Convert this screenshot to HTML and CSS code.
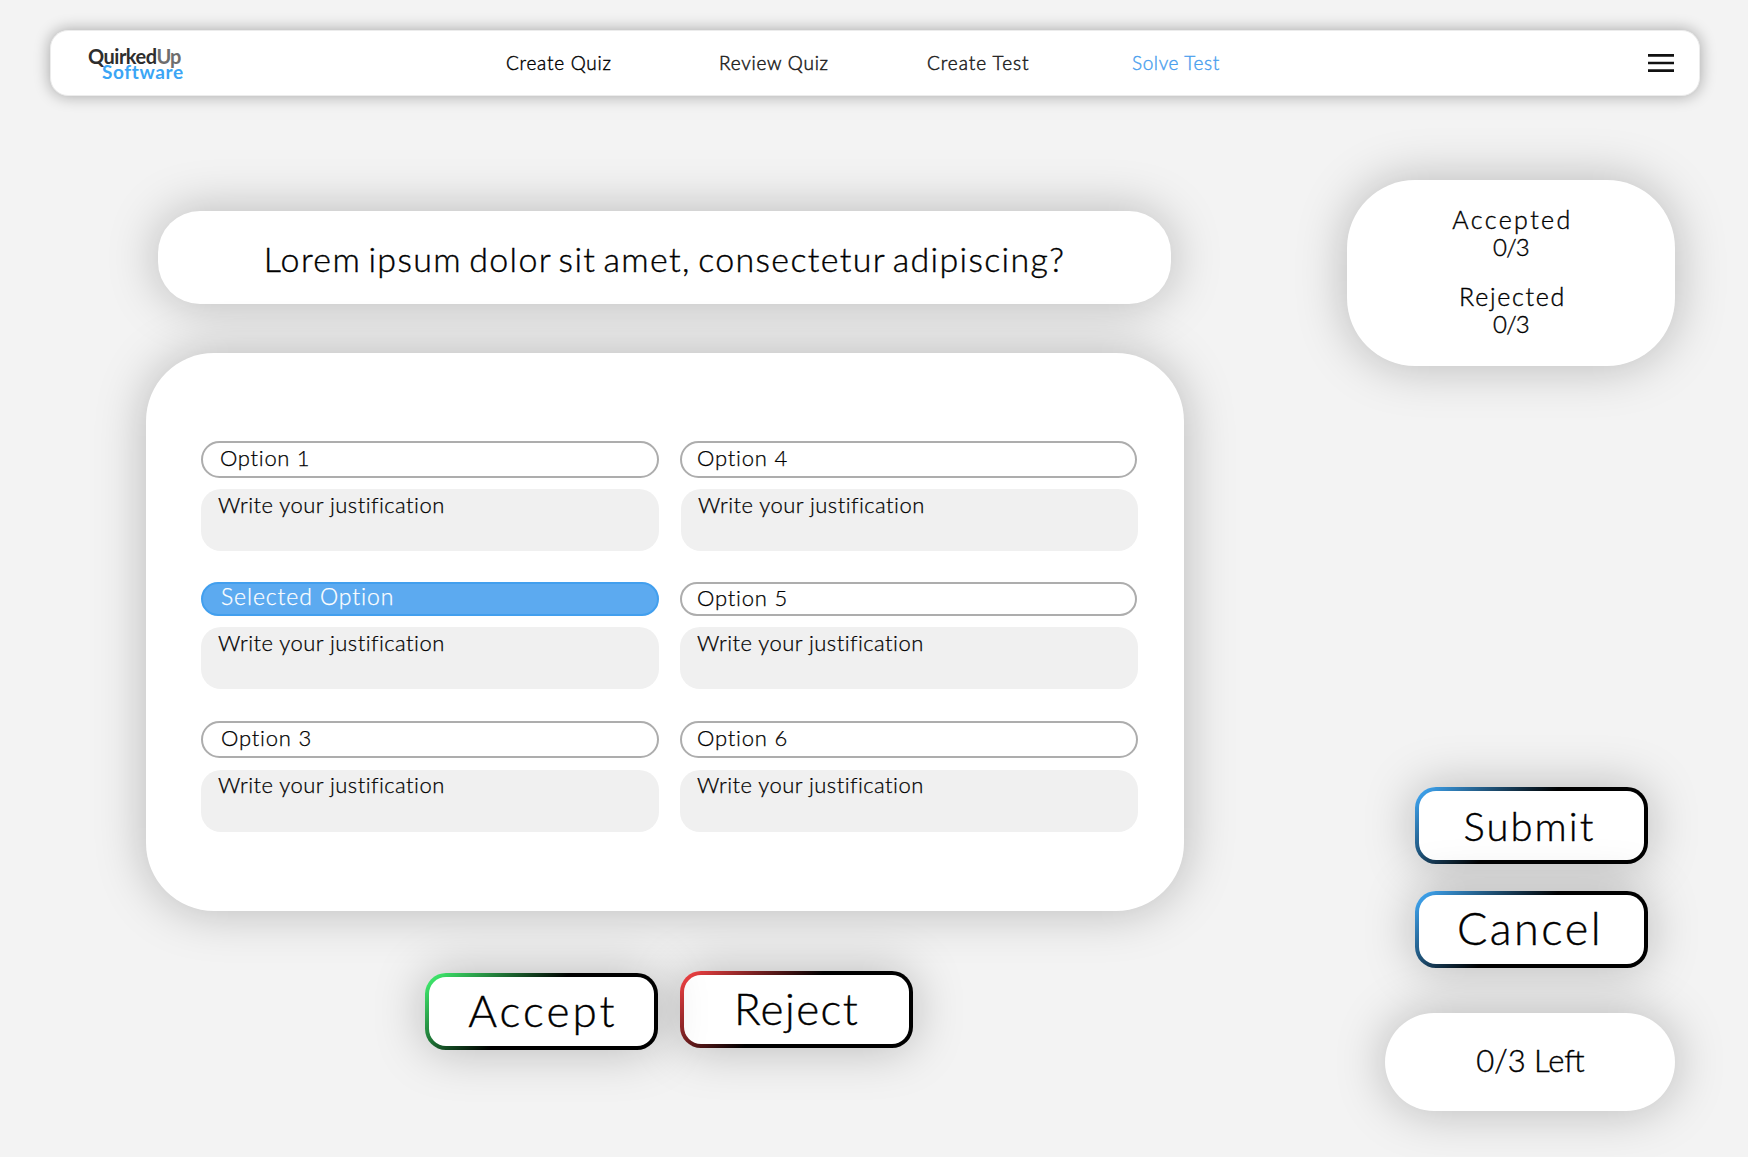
FILE: index.html
```html
<!DOCTYPE html>
<html lang="en">
<head>
<meta charset="utf-8">
<title>QuirkedUp Software - Solve Test</title>
<link rel="stylesheet" href="styles.css">
</head>
<body>
<header class="topbar">
  <div class="logo">
    <div class="logo-top"><span class="logo-name">Quirked</span><span class="logo-up">Up</span></div>
    <div class="logo-bottom">Software</div>
  </div>
  <nav class="menu">
    <a class="link">Create Quiz</a>
    <a class="link link-soft">Review Quiz</a>
    <a class="link link-soft link-wide">Create Test</a>
    <a class="link link-active">Solve Test</a>
  </nav>
  <svg class="burger" width="28" height="22" viewBox="0 0 28 22">
    <path d="M1 3.4H27M1 11H27M1 18.6H27" stroke="#111" stroke-width="2.7" fill="none"/>
  </svg>
</header>
<main class="page">
  <section class="quiz">
    <h1 class="question">Lorem ipsum dolor sit amet, consectetur adipiscing?</h1>
    <div class="card">
      <div class="answer">
        <div class="option option-one">Option 1</div>
        <div class="note">Write your justification</div>
      </div>
      <div class="answer">
        <div class="option option-right">Option 4</div>
        <div class="note note-inset">Write your justification</div>
      </div>
      <div class="answer">
        <div class="option option-short option-selected">Selected Option</div>
        <div class="note">Write your justification</div>
      </div>
      <div class="answer">
        <div class="option option-right option-short">Option 5</div>
        <div class="note">Write your justification</div>
      </div>
      <div class="answer answer-last">
        <div class="option">Option 3</div>
        <div class="note">Write your justification</div>
      </div>
      <div class="answer answer-last">
        <div class="option option-right option-full">Option 6</div>
        <div class="note">Write your justification</div>
      </div>
    </div>
    <div class="actions">
      <button class="btn btn-accept">Accept</button>
      <button class="btn btn-reject">Reject</button>
    </div>
  </section>
  <aside class="side">
    <div class="stats">
      <div class="stat accepted">Accepted</div>
      <div class="stat count">0/3</div>
      <div class="stat rejected">Rejected</div>
      <div class="stat count">0/3</div>
    </div>
    <button class="btn btn-submit">Submit</button>
    <button class="btn btn-cancel">Cancel</button>
    <div class="left">0/3 Left</div>
  </aside>
</main>
</body>
</html>
```
FILE: styles.css
```css
* { box-sizing: border-box; }

body {
  margin: 0;
  width: 1748px;
  height: 1157px;
  overflow: hidden;
  display: flex;
  flex-direction: column;
  background: #f3f3f3;
  color: #000;
  font-family: Lato, "Open Sans", sans-serif;
  font-weight: 300;
  font-kerning: normal;
  -webkit-text-stroke: 0.4px currentColor;
}

.topbar {
  display: flex;
  width: 1650px;
  height: 66px;
  flex: none;
  margin: 30px 0 0 50px;
  border: 1px solid #ececec;
  border-radius: 18px;
  background: #fff;
  box-shadow: 0 0 16px rgba(0, 0, 0, 0.33);
}

.logo {
  width: 455px;
  padding: 17px 0 0 37px;
  font-weight: 700;
  line-height: 16px;
  -webkit-text-stroke: 0;
}
.logo-top { font-size: 20px; letter-spacing: -0.5px; }
.logo-name { color: #2e2e2e; }
.logo-up { color: #6e6e6e; letter-spacing: -1px; }
.logo-bottom { padding-left: 14px; font-size: 19px; letter-spacing: 0.65px; color: #3ba5f5; }

.menu {
  display: grid;
  grid-template-columns: 213px 208px 205px auto;
  line-height: 63px;
}
.link { font-size: 19px; letter-spacing: 0.75px; white-space: nowrap; }
.link-soft { color: #222; -webkit-text-stroke: 0.5px #222; }
.link-wide { letter-spacing: 0.95px; }
.link-active { color: #4aa0ee; letter-spacing: 0.6px; }

.burger { margin: 21px 24px 0 auto; }

.page { display: flex; }

.quiz { width: 1038px; margin-left: 146px; padding-top: 115px; }

.question {
  height: 93px;
  margin: 0 13px 0 12px;
  border-radius: 42px;
  background: #fff;
  box-shadow: 0 0 50px rgba(0, 0, 0, 0.25);
  font-size: 34px;
  font-weight: 300;
  letter-spacing: 1.34px;
  line-height: 95px;
  text-align: center;
  word-spacing: -3.3px;
}

.card {
  display: grid;
  grid-template-columns: 458px 458px;
  grid-template-rows: 141px 139px 111px;
  column-gap: 21px;
  height: 558px;
  margin-top: 49px;
  padding: 88px 0 0 55px;
  border-radius: 68px;
  background: #fff;
  box-shadow: 0 0 50px rgba(0, 0, 0, 0.25);
}

.option {
  height: 37px;
  padding-left: 18px;
  border: 2px solid #adadad;
  border-radius: 19px;
  font-size: 22px;
  letter-spacing: 0.8px;
  line-height: 29px;
  -webkit-text-stroke-width: 0.25px;
}
.option-one { padding-left: 17px; letter-spacing: 0.7px; }
.option-right { width: 457px; padding-left: 15px; }
.option-full { width: 458px; }
.option-short { height: 34px; line-height: 27px; }
.option-selected {
  padding-left: 18px;
  border-color: #429fee;
  background: #5caaf0;
  color: #fff;
  font-size: 23px;
  letter-spacing: 0.9px;
  line-height: 24px;
}

.note {
  height: 62px;
  margin-top: 11px;
  padding-left: 17px;
  border-radius: 20px;
  background: #f0f0f0;
  font-size: 22px;
  letter-spacing: 0.45px;
  line-height: 31px;
  -webkit-text-stroke-width: 0.25px;
}
.note-inset { margin-left: 1px; }
.answer-last .note { margin-top: 12px; line-height: 29px; }

.actions { display: flex; gap: 22px; margin-top: 60px; padding-left: 279px; }

.btn {
  display: block;
  width: 233px;
  height: 77px;
  padding: 0;
  border: 4px solid transparent;
  border-radius: 21px;
  background:
    linear-gradient(#fff, #fff) padding-box,
    linear-gradient(137deg, var(--tint) 5%, #000 46%) border-box;
  box-shadow: 0 0 50px rgba(0, 0, 0, 0.25);
  color: #000;
  font-family: inherit;
  font-weight: 300;
  text-align: center;
  -webkit-text-stroke: 0.4px #000;
}
.btn-accept {
  --tint: #3ce068;
  z-index: 1;
  margin-top: 2px;
  padding: 0 0 3px 3px;
  font-size: 44px;
  letter-spacing: 3.1px;
  line-height: 64px;
}
.btn-reject { --tint: #e63e40; padding-bottom: 3px; font-size: 44px; letter-spacing: 1.4px; line-height: 64px; }
.btn-submit { --tint: #3b9ce4; padding: 2px 4px 0 0; font-size: 40px; letter-spacing: 2px; line-height: 67px; }
.btn-cancel { --tint: #3b9ce4; padding: 0 3px 3px 0; font-size: 45px; letter-spacing: 2.5px; line-height: 63px; }

.side { width: 328px; margin: 84px 0 0 163px; }

.stats {
  height: 186px;
  padding-top: 25px;
  border-radius: 68px;
  background: #fff;
  box-shadow: 0 0 50px rgba(0, 0, 0, 0.25);
  text-align: center;
}
.stat { font-size: 25px; line-height: 28px; }
.accepted { padding-left: 3px; letter-spacing: 2.4px; }
.rejected { margin-top: 21px; padding-left: 3px; letter-spacing: 1.7px; }
.count { font-size: 24px; letter-spacing: -0.7px; }

.side .btn { margin-left: 68px; }
.side .btn-submit { margin-top: 421px; }
.side .btn-cancel { margin-top: 27px; }

.left {
  width: 290px;
  height: 98px;
  margin: 45px 0 0 38px;
  padding-left: 1px;
  border-radius: 49px;
  background: #fff;
  box-shadow: 0 0 50px rgba(0, 0, 0, 0.25);
  font-size: 31px;
  letter-spacing: 0;
  line-height: 95px;
  text-align: center;
}
```
